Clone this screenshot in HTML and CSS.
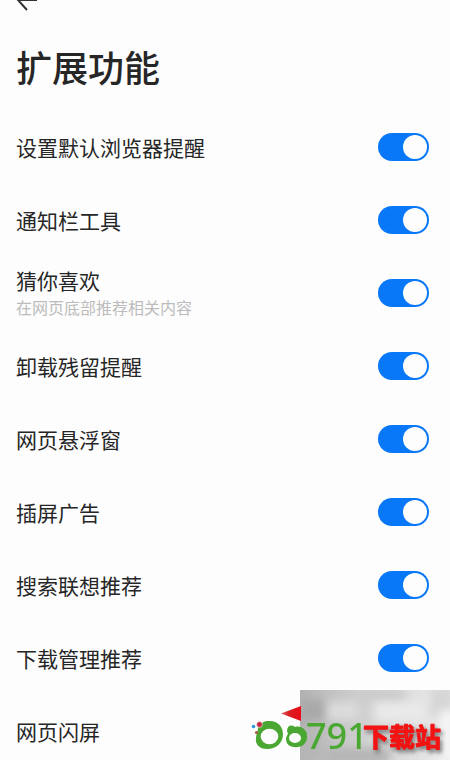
FILE: index.html
```html
<!DOCTYPE html>
<html lang="zh-CN">
<head>
<meta charset="utf-8">
<meta name="viewport" content="width=device-width, initial-scale=1">
<title>扩展功能</title>
<link rel="stylesheet" href="styles.css">
</head>
<body>
<header class="header">
  <button class="back" type="button" aria-label="返回">
    <svg viewBox="0 0 24 24" width="24" height="24" fill="none" stroke="#333" stroke-width="2"><path d="M2 12H21M11 22L2 12L11 2"/></svg>
  </button>
  <h1 class="title">扩展功能</h1>
</header>
<main class="list">
  <label class="row"><span class="name">设置默认浏览器提醒</span><input class="switch" type="checkbox" role="switch" checked></label>
  <label class="row"><span class="name">通知栏工具</span><input class="switch" type="checkbox" role="switch" checked></label>
  <label class="row"><span class="name">猜你喜欢<small class="hint">在网页底部推荐相关内容</small></span><input class="switch" type="checkbox" role="switch" checked></label>
  <label class="row"><span class="name">卸载残留提醒</span><input class="switch" type="checkbox" role="switch" checked></label>
  <label class="row"><span class="name">网页悬浮窗</span><input class="switch" type="checkbox" role="switch" checked></label>
  <label class="row"><span class="name">插屏广告</span><input class="switch" type="checkbox" role="switch" checked></label>
  <label class="row"><span class="name">搜索联想推荐</span><input class="switch" type="checkbox" role="switch" checked></label>
  <label class="row"><span class="name">下载管理推荐</span><input class="switch" type="checkbox" role="switch" checked></label>
  <div class="row"><span class="name">网页闪屏</span></div>
</main>
<svg class="mark" viewBox="0 0 210 80" width="210" height="80" role="img" aria-label="791下载站">
  <defs>
    <linearGradient id="base" x1="0" x2="1" y1="0" y2="0">
      <stop offset="0" stop-color="#b2b2b2"/><stop offset=".25" stop-color="#c5c5c5"/><stop offset=".5" stop-color="#d5d5d5"/><stop offset=".75" stop-color="#dfdfdf"/><stop offset="1" stop-color="#eee"/>
    </linearGradient>
    <linearGradient id="red" x1="0" x2="1" y1="0" y2="0"><stop offset="0" stop-color="#d66"/><stop offset=".4" stop-color="#d91f24"/><stop offset="1" stop-color="#e80c18"/></linearGradient>
    <filter id="soft" x="-20%" y="-20%" width="140%" height="140%"><feGaussianBlur stdDeviation="4"/></filter>
    <clipPath id="panel"><path d="M60 10H210V80H60Z"/></clipPath>
  </defs>
  <g clip-path="url(#panel)">
    <path d="M60 10H210V80H60Z" fill="url(#base)"/>
    <g filter="url(#soft)">
      <path d="M60 20H84V40H60Z" fill="#a9a9a9"/>
      <path d="M88 22H118V40H88Z" fill="#dcdcdc"/>
      <path d="M120 10H165V20H120Z" fill="#c9c9c9"/>
      <path d="M135 22H185V42H135Z" fill="#e9e9e9"/>
      <path d="M190 6H214V38H190Z" fill="#d6d6d6"/>
      <path d="M200 30H214V80H200Z" fill="#f4f4f4"/>
      <path d="M85 68H150V84H85Z" fill="#b5b5b5"/>
      <path d="M60 60H80V80H60Z" fill="#b6b6b6"/>
    </g>
  </g>
  <path d="M41 33.500L61 26V41Z" fill="url(#red)"/>
  <path d="M28 41C37 40 43 46 43 54C43 63 36 69 27 69C19 69 15 64 16 58C16 54 18 52 18 48C20 43 24 41 28 41Z" fill="#4aa832"/>
  <ellipse cx="29.500" cy="56.500" rx="8.800" ry="7.800" fill="#fdfdfd"/>
  <path d="M47 51C47 46 51 44 55 47C62 45 68 51 67 58C66 65 60 68 54 67C46 67 44 58 48 54Z" fill="#4aa832"/>
  <ellipse cx="55" cy="58" rx="6" ry="5" fill="#fdfdfd"/>
  <circle cx="13.500" cy="46.500" r="1.800" fill="#2a9bdd"/>
  <circle cx="19.500" cy="44.500" r="2.900" fill="#c32842" stroke="#fdfdfd" stroke-width=".6"/>
  <circle cx="16.500" cy="52.500" r="1.600" fill="#a75745"/>
  <text class="mark-number" x="66" y="69">791</text>
  <text class="mark-name" x="123" y="67">下载站</text>
</svg>
</body>
</html>
```

FILE: styles.css
```css
* {
  box-sizing: border-box;
}

body {
  margin: 0;
  min-height: 100vh;
  background: #fdfdfd;
  color: #262626;
  font-family: "Noto Sans CJK SC", "Noto Sans", sans-serif;
}

.header {
  padding: 0 16px;
}

.back {
  display: block;
  margin-top: -12px;
  padding: 0;
  border: 0;
  background: none;
}

.back svg {
  display: block;
}

.title {
  margin: 30px 0 20px;
  font-size: 36px;
  line-height: 48px;
  font-weight: 500;
}

.list {
  display: flex;
  flex-direction: column;
}

.row {
  display: flex;
  align-items: center;
  justify-content: space-between;
  min-height: 73px;
  padding: 0 21px 0 16px;
}

.name {
  font-size: 21px;
  line-height: 28px;
}

.hint {
  display: block;
  color: #bcbcbc;
  font-size: 16px;
  line-height: 26px;
}

.switch {
  appearance: none;
  display: flex;
  flex: none;
  justify-content: flex-end;
  width: 51px;
  height: 28px;
  margin: 0;
  padding: 2px;
  border-radius: 14px;
  background: #0878f8;
}

.switch::before {
  content: "";
  width: 24px;
  height: 24px;
  border-radius: 50%;
  background: #fdfdfd;
}

.switch:not(:checked) {
  justify-content: flex-start;
  background: #ccc;
}

.mark {
  position: fixed;
  right: 0;
  bottom: 0;
  pointer-events: none;
}

.mark-number {
  fill: #4aa832;
  font-family: "Noto Sans", sans-serif;
  font-size: 36px;
  font-weight: 500;
}

.mark-name {
  fill: #f31313;
  stroke: #f31313;
  stroke-width: 1px;
  stroke-linejoin: round;
  font-size: 26px;
  font-weight: 700;
  filter: drop-shadow(2px 3px 2px #777);
}
```
